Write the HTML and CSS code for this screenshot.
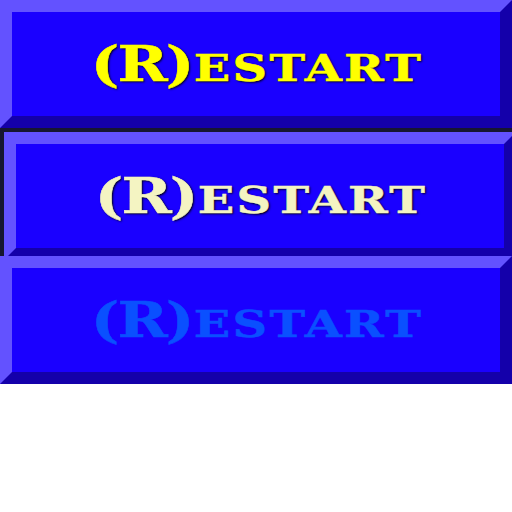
FILE: index.html
```html
<!DOCTYPE html>
<html>
<head>
<meta charset="utf-8">
<link rel="stylesheet" href="styles.css">
</head>
<body>
<div class="stack">
  <div class="slot">
    <button class="btn normal"><span class="label"><span class="big">(R)</span><span class="sc">ESTART</span></span></button>
  </div>
  <div class="slot focused">
    <button class="btn hover"><span class="label"><span class="big">(R)</span><span class="sc">ESTART</span></span></button>
  </div>
  <div class="slot">
    <button class="btn disabled"><span class="label"><span class="big">(R)</span><span class="sc">ESTART</span></span></button>
  </div>
</div>
</body>
</html>
```
FILE: styles.css
```css
html, body {
  margin: 0;
  padding: 0;
  background: #ffffff;
}
.stack {
  display: flex;
  flex-direction: column;
  width: 512px;
}
.slot {
  width: 512px;
  height: 128px;
  overflow: hidden;
  box-sizing: border-box;
}
.slot.focused {
  padding: 4px 0 0 4px;
  background: #161630;
}
.btn {
  display: flex;
  align-items: center;
  justify-content: center;
  box-sizing: border-box;
  width: 512px;
  height: 128px;
  margin: 0;
  padding: 0;
  border-width: 12px;
  border-style: solid;
  border-color: #6352ff #1400aa #1400aa #6352ff;
  background: #1a00ff;
  font-family: "DejaVu Serif", serif;
  font-weight: bold;
  cursor: default;
}
.label {
  display: inline-block;
  transform: scaleX(1.26);
  white-space: nowrap;
  line-height: 1;
  margin-top: 0;
  margin-left: 2px;
  -webkit-text-stroke: 0.5px currentColor;
}
.big {
  font-size: 48px;
  letter-spacing: -1.5px;
}
.sc {
  font-size: 38px;
  letter-spacing: 1.8px;
  margin-left: 1px;
}
.normal {
  color: #ffff00;
  text-shadow: 1px 1px 2px #000000;
}
.hover {
  color: #f4f4c2;
  text-shadow: 1px 1px 2px #000000;
}
.disabled {
  color: #0a50ff;
}
```
